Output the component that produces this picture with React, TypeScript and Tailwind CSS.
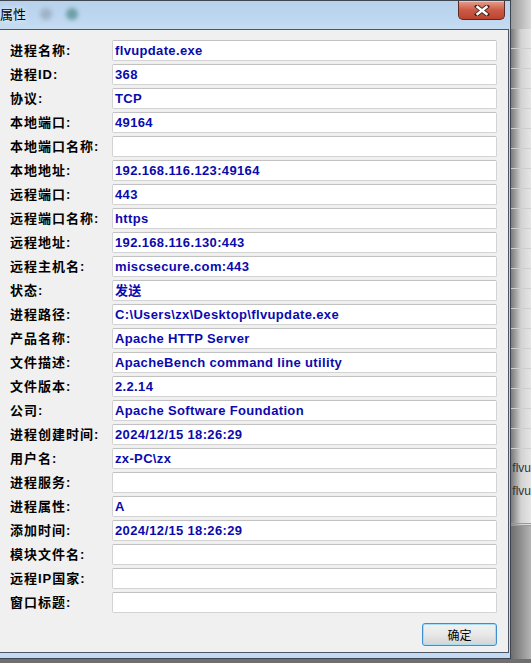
import React from "react";

const rows: [string, string][] = [
	["进程名称:", "flvupdate.exe"],
	["进程ID:", "368"],
	["协议:", "TCP"],
	["本地端口:", "49164"],
	["本地端口名称:", ""],
	["本地地址:", "192.168.116.123:49164"],
	["远程端口:", "443"],
	["远程端口名称:", "https"],
	["远程地址:", "192.168.116.130:443"],
	["远程主机名:", "miscsecure.com:443"],
	["状态:", "发送"],
	["进程路径:", "C:\\Users\\zx\\Desktop\\flvupdate.exe"],
	["产品名称:", "Apache HTTP Server"],
	["文件描述:", "ApacheBench command line utility"],
	["文件版本:", "2.2.14"],
	["公司:", "Apache Software Foundation"],
	["进程创建时间:", "2024/12/15 18:26:29"],
	["用户名:", "zx-PC\\zx"],
	["进程服务:", ""],
	["进程属性:", "A"],
	["添加时间:", "2024/12/15 18:26:29"],
	["模块文件名:", ""],
	["远程IP国家:", ""],
	["窗口标题:", ""],
];

function CloseButton() {
	return (
		<div className="mr-[5px] w-[47px] h-[19px] rounded-b-[5px] border border-t-0 border-[#5b2a22] bg-gradient-to-b from-[#e3a08f] via-[#cc5a46] to-[#bd442f] flex items-center justify-center shadow-[inset_0_1px_0_#f3c3b6]">
			<svg width="16" height="11" viewBox="0 0 16 11">
				<path d="M3 1.5 L13 9.5 M13 1.5 L3 9.5" stroke="#3d2620" strokeWidth="4.2" strokeLinecap="square" />
				<path d="M3.5 2 L12.5 9 M12.5 2 L3.5 9" stroke="#ffffff" strokeWidth="2.4" strokeLinecap="square" />
			</svg>
		</div>
	);
}

function Field({ label, value }: { label: string; value: string }) {
	return (
		<div className="flex items-center h-[21px]">
			<div className="w-[112px] pl-[10px] text-[13px] font-bold tracking-[1px] text-black font-['Liberation_Sans','Noto_Sans_CJK_SC',sans-serif] whitespace-nowrap">
				{label}
			</div>
			<div className="w-[385px] h-[21px] bg-white rounded-[2px] border border-[#d3d3d3] border-t-[#c2c2c2] pl-[2px] leading-[19px] text-[13px] font-bold tracking-[0.35px] text-[#0a0aae] font-['Liberation_Sans','Noto_Sans_CJK_SC',sans-serif] whitespace-nowrap overflow-hidden">
				{value}
			</div>
		</div>
	);
}

export default function App() {
	return (
		<div className="w-[531px] h-[663px] overflow-hidden bg-[#727272] flex flex-col">
			<div className="flex h-[659px]">
				{/* dialog window */}
				<div className="w-[516px] h-[659px] flex flex-col bg-[#c2daf3] border-t border-r border-b border-[#3f4650]">
					{/* title bar */}
					<div className="h-[28px] flex justify-between bg-gradient-to-b from-[#b8d2ec] via-[#bcd6f0] to-[#c6dcf1]">
						<div className="flex items-center gap-[14px] pb-[2px]">
							<span className="ml-0 text-[13px] text-black font-['Noto_Sans_CJK_SC',sans-serif] [text-shadow:0_0_6px_#ffffff]">
								属性
							</span>
							<span className="w-[12px] h-[12px] rounded-full bg-[#9fb3c6] blur-[2px]" />
							<span className="w-[12px] h-[12px] rounded-full bg-[#6d9ea6] blur-[2px]" />
						</div>
						<CloseButton />
					</div>
					{/* body */}
					<div className="flex flex-1">
						<div className="w-[509px] h-[624px] bg-[#f0f0f0] border-t border-r border-b border-[#4d5662] flex flex-col pt-[10px]">
							<div className="flex flex-col gap-[3px]">
								{rows.map(([l, v]) => (
									<Field key={l} label={l} value={v} />
								))}
							</div>
							<div className="flex justify-end pr-[11px] mt-[10px]">
								<button className="w-[75px] h-[23px] rounded-[3px] border border-[#3c8fd0] bg-gradient-to-b from-[#f2f2f2] via-[#e8e8e8] to-[#d4d4d4] shadow-[inset_0_0_0_1px_#a9dcf6] text-[12px] text-black font-['Noto_Sans_CJK_SC',sans-serif] leading-[20px]">
									确定
								</button>
							</div>
						</div>
						<div className="flex-1" />
					</div>
				</div>
				{/* window behind */}
				<div className="flex-1 flex flex-col bg-gradient-to-r from-[#7a7a7a] via-[#d2d2d2] to-[#e6e6e6]">
					<div className="h-[29px] bg-gradient-to-r from-[#9a9a9a] to-[#dadada]" />
					<div className="h-[427px] flex flex-col">
						{Array.from({ length: 21 }).map((_, i) => (
							<div key={i} className="h-[20px] border-b border-[#cfcfcf]" />
						))}
					</div>
					<div className="h-[23px] pl-[1px] flex items-center text-[12px] text-[#333] font-['Liberation_Sans',sans-serif]">
						flvu
					</div>
					<div className="h-[23px] pl-[1px] flex items-center text-[12px] text-[#333] font-['Liberation_Sans',sans-serif]">
						flvu
					</div>
					<div className="h-[24px] border-b-[3px] border-double border-[#9a9a9a]" />
					<div className="flex-1 bg-gradient-to-r from-[#6e6e6e] to-[#b5b5b5]" />
				</div>
			</div>
			<div className="flex-1 bg-[#6f6f6f]" />
		</div>
	);
}
